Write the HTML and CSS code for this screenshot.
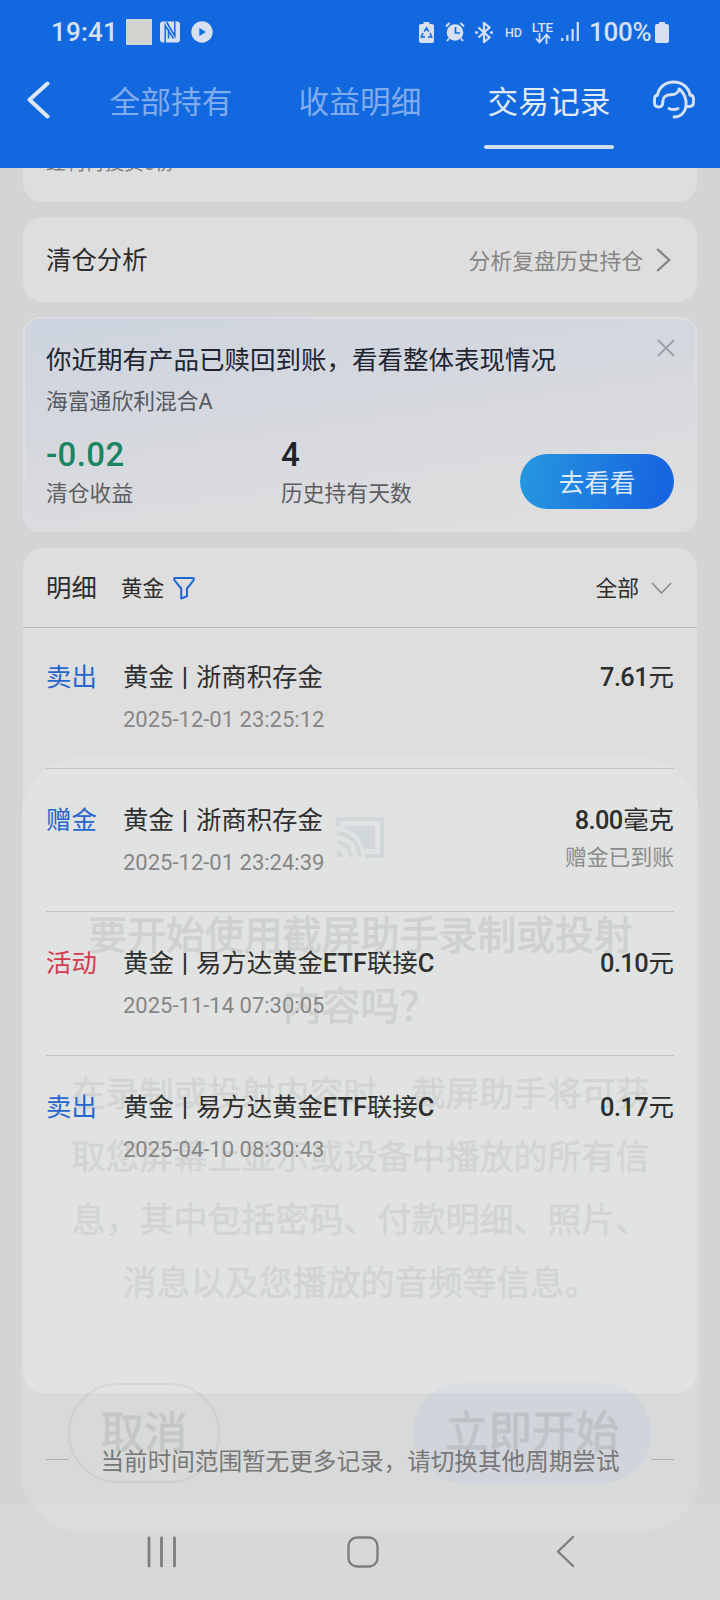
FILE: index.html
```html
<!DOCTYPE html>
<html lang="zh-CN">
<head>
<meta charset="utf-8">
<title>交易记录</title>
<link rel="stylesheet" href="styles.css">
</head>
<body>
<div class="screen">
  <header class="header">
    <div class="status">
      <div class="status-left">
        <span class="clock">19:41</span>
        <span class="thumb"></span>
        <svg class="nfc" width="20" height="22" viewBox="0 0 20 22"><rect x="0" y="0.5" width="20" height="21" rx="3" fill="#d6e0f0"/><path d="M5.200 22V4.500L13.500 17.500M6.500 1l8.300 14V0.500M8.500 8v9.500" fill="none" stroke="#1268de" stroke-width="1.500"/></svg>
        <svg class="play" width="22" height="22" viewBox="0 0 22 22"><circle cx="11" cy="11" r="10.7" fill="#d6e0f0"/><path d="M8.3 7v8l6.7-4z" fill="#1268de"/></svg>
      </div>
      <div class="status-right">
        <svg class="saver" width="15" height="21" viewBox="0 0 15 21"><path d="M4.500 0h6v2H13q2 0 2 2v15q0 2-2 2H2q-2 0-2-2V4q0-2 2-2h2.500z" fill="#d6e0f0"/><path d="M5.300 9.500L7.500 6l2.200 3.500M11 11l1.700 4H9M6 15H2.300L4 11" fill="none" stroke="#1268de" stroke-width="1.500"/></svg>
        <svg class="alarm" width="20" height="20" viewBox="0 0 20 20"><circle cx="10" cy="10.500" r="8.300" fill="#d6e0f0"/><path d="M1 4.500L4.500 1M19 4.500L15.500 1M4 16.500l-2 2.500M16 16.500l2 2.500" stroke="#d6e0f0" stroke-width="2"/><path d="M10.500 5v6H15" fill="none" stroke="#1268de" stroke-width="1.700"/></svg>
        <svg class="bt" width="18" height="21" viewBox="0 0 18 21"><path d="M3.500 5.500l11 10-5.500 4.500v-19l5.500 4.500-11 10" fill="none" stroke="#d6e0f0" stroke-width="2.200"/><circle cx="1.500" cy="10.500" r="1.500" fill="#d6e0f0"/><circle cx="16.500" cy="10.500" r="1.500" fill="#d6e0f0"/></svg>
        <span class="hd">HD</span>
        <span class="lte"><span>LTE</span><svg width="16" height="11" viewBox="0 0 16 11"><path d="M4.500 0v9M1 5.500l3.500 4 3.500-4M11.500 11V1.500M8 5.500l3.500-4 3.500 4" fill="none" stroke="#d6e0f0" stroke-width="1.800"/></svg></span>
        <svg class="signal" width="18" height="20" viewBox="0 0 18 20"><path d="M1.200 16v3M6.400 13v6M11.600 7v12M16.800 0v19" stroke="#d6e0f0" stroke-width="2.200"/></svg>
        <span class="pct">100%</span>
        <svg class="batt" width="14" height="21" viewBox="0 0 14 21"><path d="M4 0h6v2h2q2 0 2 2v15q0 2-2 2H2q-2 0-2-2V4q0-2 2-2h2z" fill="#d6e0f0"/></svg>
      </div>
    </div>
    <nav class="tabs">
      <svg class="back" width="23" height="38" viewBox="0 0 23 38"><path d="M20.500 2.500L2.500 18.800l18 16.700" fill="none" stroke="#dce6f4" stroke-width="4" stroke-linecap="round" stroke-linejoin="round"/></svg>
      <span class="tab">全部持有</span>
      <span class="tab">收益明细</span>
      <span class="tab active">交易记录</span>
      <svg class="service" width="42" height="40" viewBox="0 0 42 40"><g fill="none" stroke="#d6e2f4" stroke-width="2.900" stroke-linecap="round" stroke-linejoin="round"><path d="M4.500 15C6 7 12.500 2 20.700 2S35.500 7 37 15"/><path d="M9.800 22c0-5 3-7.300 8-7.300 5.200 0 7.500-1.500 8.400-5.700 4 3 5.800 7 6.800 12v5.500h3.500c3 0 4-1.500 4-4.500v-3c0-2.500-1-4-3.500-4"/><path d="M4.500 15c-2 .3-3 1.500-3 4v4c0 2.500 1.300 4 4.200 4s4.100-1.500 4.100-5"/><path d="M33 26.500c-1 6-5 10.500-12 10.500"/><path d="M16 28.500c3 1.400 6 1.400 9 0"/></g></svg>
    </nav>
  </header>

  <main class="content">
    <section class="card clipped"><span class="clipped-text">红利再投资0份</span></section>

    <section class="card analysis">
      <span class="title">清仓分析</span>
      <span class="hint">分析复盘历史持仓</span>
      <svg width="15" height="24" viewBox="0 0 15 24"><path d="M1.200 1l12 11-12 11" fill="none" stroke="#838383" stroke-width="2.300"/></svg>
    </section>

    <section class="card promo">
      <svg class="close" width="18" height="18" viewBox="0 0 18 18"><path d="M1 1l16 16M17 1L1 17" stroke="#999ea6" stroke-width="1.800"/></svg>
      <h2>你近期有产品已赎回到账，看看整体表现情况</h2>
      <p class="fund">海富通欣利混合A</p>
      <div class="stats">
        <div class="stat first"><b class="green">-0.02</b><span>清仓收益</span></div>
        <div class="stat"><b>4</b><span>历史持有天数</span></div>
        <button class="go">去看看</button>
      </div>
    </section>

    <section class="card list">
      <div class="list-head">
        <span class="title">明细</span>
        <span class="kind">黄金</span>
        <svg class="funnel" width="22" height="24" viewBox="0 0 22 24"><path d="M1.500 2h19q.8 1.500-.2 2.700L14 12.500v7.800L8.200 22.500v-10L1.700 4.700Q.7 3.500 1.500 2z" fill="none" stroke="#2067d2" stroke-width="2" stroke-linejoin="round"/></svg>
        <span class="all">全部</span>
        <svg class="down" width="21" height="12" viewBox="0 0 21 12"><path d="M1 1l9.500 10L20 1" fill="none" stroke="#8d8d8d" stroke-width="1.700"/></svg>
      </div>
      <div class="row">
        <span class="tag">卖出</span>
        <div class="info"><div class="name">黄金 <b>|</b> 浙商积存金</div><div class="date">2025-12-01 23:25:12</div></div>
        <div class="amount"><div><b>7.61</b>元</div></div>
      </div>
      <div class="row">
        <span class="tag">赠金</span>
        <div class="info"><div class="name">黄金 <b>|</b> 浙商积存金</div><div class="date">2025-12-01 23:24:39</div></div>
        <div class="amount"><div><b>8.00</b>毫克</div><div class="note">赠金已到账</div></div>
      </div>
      <div class="row">
        <span class="tag red">活动</span>
        <div class="info"><div class="name">黄金 <b>|</b> 易方达黄金<b>ETF</b>联接<b>C</b></div><div class="date">2025-11-14 07:30:05</div></div>
        <div class="amount"><div><b>0.10</b>元</div></div>
      </div>
      <div class="row">
        <span class="tag">卖出</span>
        <div class="info"><div class="name">黄金 <b>|</b> 易方达黄金<b>ETF</b>联接<b>C</b></div><div class="date">2025-04-10 08:30:43</div></div>
        <div class="amount"><div><b>0.17</b>元</div></div>
      </div>
    </section>

    <div class="end"><i></i><span>当前时间范围暂无更多记录，请切换其他周期尝试</span><i></i></div>
  </main>

  <footer class="navbar">
    <svg width="30" height="32" viewBox="0 0 30 32"><path d="M2 2v28M14.500 2v28M27.500 2v28" stroke="#7e7e7e" stroke-width="2.800" stroke-linecap="round"/></svg>
    <svg width="32" height="32" viewBox="0 0 32 32"><rect x="1.500" y="1.500" width="29" height="29" rx="8.500" fill="none" stroke="#7e7e7e" stroke-width="2.400"/></svg>
    <svg width="19" height="33" viewBox="0 0 19 33"><path d="M17 2L2 16.500 17 31" fill="none" stroke="#7e7e7e" stroke-width="2.400" stroke-linecap="round" stroke-linejoin="round"/></svg>
  </footer>

  <!-- Fading system dialog -->
  <div class="dialog">
    <svg class="cast" width="48" height="41" viewBox="0 0 48 41"><path d="M2 9V2h44v37H29" fill="none" stroke="#c8d1d5" stroke-width="4"/><path d="M9 9h30v23H27C25 21 19 14 9 12z" fill="#c9d3d9"/><path d="M1 16c13 1 22 10 23 24M1 25c8 1 13 6 14 15" fill="none" stroke="#ccd3d6" stroke-width="4"/><path d="M1 33q6 1 7 7H1z" fill="#ccd3d6"/></svg>
    <div class="dialog-title">要开始使用截屏助手录制或投射<br>内容吗？</div>
    <div class="dialog-body">在录制或投射内容时，截屏助手将可获<br>取您屏幕上显示或设备中播放的所有信<br>息，其中包括密码、付款明细、照片、<br>消息以及您播放的音频等信息。</div>
    <div class="dialog-actions"><span class="cancel"><span>取消</span></span><span class="start"><span>立即开始</span></span></div>
  </div>
</div>
</body>
</html>
```

FILE: styles.css
```css
* { box-sizing: border-box; }
body {
  margin: 0;
  font-family: Roboto, "Noto Sans CJK SC", sans-serif;
  font-weight: 400;
  color: #2d2d2d;
  background: #d4d4d4;
}
svg { display: block; flex: none; }
b { font-weight: 500; }
.screen {
  position: relative;
  width: 720px;
  height: 1600px;
  overflow: hidden;
  display: flex;
  flex-direction: column;
}

/* Header */
.header { height: 168px; background: #1268de; color: #d6e0f0; flex: none; }
.status { height: 64px; display: flex; justify-content: space-between; padding: 0 51px 0 51px; }
.status-left, .status-right { display: flex; align-items: center; }
.clock { font-size: 26px; font-weight: 500; letter-spacing: 0.2px; width: 75px; }
.thumb { width: 26px; height: 26px; background: #d2d2ce; }
.nfc { margin-left: 8px; }
.play { margin-left: 11px; }
.alarm { margin-left: 11px; }
.bt { margin-left: 10px; }
.hd { margin-left: 12px; width: 18px; font-size: 12.500px; font-weight: 500; }
.lte { margin-left: 8px; width: 23px; display: flex; flex-direction: column; align-items: center; font-size: 13.500px; line-height: 12px; font-weight: 500; }
.signal { margin-left: 7px; }
.pct { margin-left: 10px; width: 63px; font-size: 26px; font-weight: 500; white-space: nowrap; letter-spacing: -0.3px; }
.batt { margin-left: 3px; }
.tabs { height: 104px; display: flex; align-items: flex-start; padding: 17px 25px 0 27px; }
.tab { font-size: 30.700px; line-height: 44px; color: #80aced; width: 130px; text-align: center; height: 68px; margin-left: 59px; white-space: nowrap; }
.back { margin-right: -3px; }
.tab.active { position: relative; color: #e2ebf7; }
.tab.active::after { content: ""; position: absolute; left: 0; right: 0; bottom: 0; height: 4px; border-radius: 2px; background: #d0def4; }
.service { margin-left: auto; margin-top: -1px; }

/* Cards */
.content { height: 1336px; flex: none; padding: 0 23px; }
.card { background: #dedede; border-radius: 20px; }
.clipped { height: 34px; border-radius: 0 0 20px 20px; overflow: hidden; padding-left: 23px; }
.clipped-text { display: block; margin-top: -19px; font-size: 19.600px; line-height: 30px; color: #808080; }
.title { font-size: 25.400px; position: relative; top: -1.500px; }
.analysis { height: 85px; margin-top: 15px; padding: 0 26px 0 23px; display: flex; align-items: center; }
.hint { margin-left: auto; margin-right: 13px; font-size: 21.800px; color: #858585; padding-bottom: 1px; }
.promo {
  position: relative;
  height: 215px;
  margin-top: 15px;
  padding: 23px 21px 0;
  border: 2px solid #dcdee1;
  border-bottom-color: #dedede;
  border-radius: 16px;
  background: linear-gradient(172deg, #cdd4df 0%, #d4d7de 35%, #dadbde 65%, #dedede 90%);
}
.close { position: absolute; right: 20px; top: 20px; }
.promo h2 { margin: 0; font-size: 25.500px; font-weight: 400; line-height: 36px; color: #202431; }
.promo p { margin: 9px 0 0; font-size: 21.800px; line-height: 30px; color: #555962; }
.stats { display: flex; margin-top: 17px; }
.stat { display: flex; flex-direction: column; color: #5c5e62; font-size: 21.800px; }
.stat b { font-size: 33px; line-height: 42px; color: #20222b; }
.stat span { line-height: 36px; }
.stat .green { color: #198563; letter-spacing: 0.4px; }
.stat.first { width: 235px; }
.go {
  margin: 20px 0 0 auto;
  width: 154px;
  height: 55px;
  padding: 0 0 3px;
  border: 0;
  border-radius: 28px;
  background: linear-gradient(100deg, #2698df, #1765df 90%);
  color: #dbe9f9;
  font: 25.500px Roboto, "Noto Sans CJK SC", sans-serif;
}

/* Records */
.list { height: 845px; margin-top: 16px; }
.list-head { height: 80px; display: flex; align-items: center; padding: 0 25px 0 23px; border-bottom: 1px solid #b9b9b9; }
.kind, .all { font-size: 21.800px; padding-bottom: 2px; }
.kind { margin-left: 24px; margin-right: 9px; }
.all { margin-left: auto; margin-right: 12px; }
.row {
  height: 143.300px;
  margin: 0 23px;
  padding-top: 33px;
  display: flex;
  align-items: flex-start;
  border-bottom: 1px solid #b9b9b9;
  font-size: 25.400px;
  line-height: 36px;
}
.row > * { position: relative; z-index: 2; }
.row:nth-child(2) { height: 141px; padding-top: 31px; }
.row:last-child { border-bottom: 0; }
.tag { width: 77px; color: #2766cc; }
.tag.red { color: #d33a50; }
.name { color: #2f2f2f; word-spacing: 1.600px; }
.date { margin-top: 9px; font-size: 22px; line-height: 32px; color: #868686; }
.amount { margin-left: auto; text-align: right; }
.amount b { letter-spacing: -0.600px; margin-right: 0.600px; }
.note { font-size: 21.800px; line-height: 30px; margin-top: 5px; color: #8b8b8b; }
.end { position: relative; z-index: 2; height: 111px; display: flex; align-items: center; justify-content: space-between; padding: 22px 23px 0; color: #777; font-size: 23.600px; }
.end i { width: 23px; height: 1px; background: #aeb0af; }

/* System navigation */
.navbar { height: 96px; flex: none; background: #d8d8d8; display: flex; align-items: flex-start; padding: 32px 0 0 147px; }
.navbar svg { position: relative; z-index: 2; }
.navbar svg:nth-child(2) { margin-left: 170px; }
.navbar svg:nth-child(3) { margin-left: 177px; margin-top: -1px; }

.dialog {
  position: absolute;
  z-index: 1;
  left: 21px;
  top: 758px;
  width: 679px;
  height: 773px;
  border-radius: 60px;
  background: rgba(235, 253, 244, 0.15);
  text-align: center;
  pointer-events: none;
}
.cast { margin: 59px auto 0 315px; opacity: 0.65; }
.dialog-title, .dialog-body, .dialog-actions { color: #464646; -webkit-text-stroke: 0.9px #464646; }
.dialog-title { margin-top: 42px; font-size: 38.900px; line-height: 71px; opacity: 0.11; }
.dialog-body { margin-top: 21px; font-size: 34px; line-height: 63px; opacity: 0.085; -webkit-text-stroke-width: 0.6px; }
.dialog-actions { display: flex; margin-top: 68px; padding: 0 49px 0 47px; justify-content: space-between; font-size: 43.500px; line-height: 100px; }
.dialog-actions span span { opacity: 0.12; display: block; }
.cancel { width: 152px; height: 100px; line-height: 98px; border: 2px solid rgba(90, 90, 90, 0.08); border-radius: 50px; }
.start { width: 238px; height: 100px; border-radius: 50px; background: rgba(170, 180, 230, 0.13); }
```
